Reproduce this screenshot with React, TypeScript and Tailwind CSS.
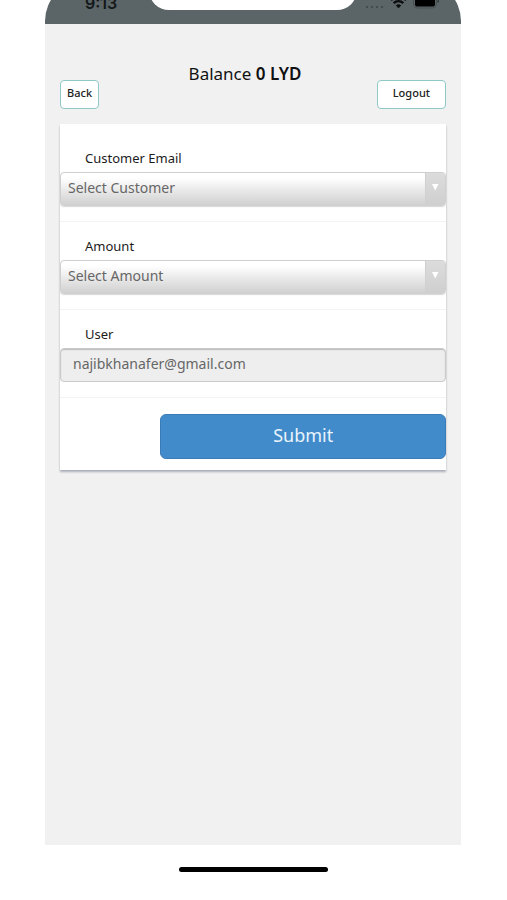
import type { ReactNode } from 'react'

function StatusBar() {
  return (
    <div className="flex h-6 flex-col justify-end overflow-hidden">
      <div className="grid h-[43px] shrink-0 grid-cols-[1fr_208px_1fr] rounded-t-[40px] bg-[#5b6466]">
        <span className="self-end pb-[11px] pl-10 font-['Inter'] text-[16px] leading-5 font-semibold text-[#14181a]">
          9:13
        </span>
        <div className="h-[29px] rounded-b-[20px] bg-white" />
        <div className="flex items-end justify-end gap-[6px] pr-[22px] pb-[15px]">
          <svg width="19" height="14" viewBox="0 0 19 14" className="shrink-0" aria-hidden="true">
            <g fill="#3f4749">
              <circle cx="2" cy="12" r="1.1" />
              <circle cx="7" cy="12" r="1.1" />
              <circle cx="12" cy="12" r="1.1" />
              <circle cx="17" cy="12" r="1.1" />
            </g>
          </svg>
          <svg width="17" height="14" viewBox="0 0 17 14" className="shrink-0" aria-hidden="true">
            <g fill="none" stroke="#0b0d0e" strokeWidth="2.2">
              <path d="M1 5.1a10.6 10.6 0 0 1 15 0" />
              <path d="M3.7 8.1a6.8 6.8 0 0 1 9.6 0" />
            </g>
            <path d="M8.5 13.3 5.8 10.5a3.8 3.8 0 0 1 5.4 0z" fill="#0b0d0e" />
          </svg>
          <svg width="26" height="14" viewBox="0 0 26 14" className="shrink-0" aria-hidden="true">
            <rect x="0.5" y="-1" width="23" height="14" rx="4" fill="none" stroke="#474f51" />
            <rect x="2" y="0" width="20" height="11.500" rx="2" fill="#000" />
            <path d="M24.500 4v4c1-.3 1.500-1 1.500-2s-.5-1.700-1.500-2z" fill="#343b3d" />
          </svg>
        </div>
      </div>
    </div>
  )
}

function Field({ id, label, children }: { id: string; label: string; children: ReactNode }) {
  return (
    <div className="border-b border-[#f3f3f3] pt-[14px] pb-[15px]">
      <label htmlFor={id} className="mb-1 block pl-[25px] text-[13px] leading-5 text-[#1c1c1c]">
        {label}
      </label>
      {children}
    </div>
  )
}

function Picker({ id, placeholder }: { id: string; placeholder: string }) {
  return (
    <div className="relative">
      <select
        id={id}
        className="block h-[34px] w-full appearance-none rounded-[4px] border border-[#cfcfcf] bg-linear-to-b from-white from-15% to-[#d0d0d0] pr-7 pb-[3px] pl-[7px] text-[14px] text-[#666] shadow-[0_1px_1px_#d8d8d8]"
      >
        <option>{placeholder}</option>
      </select>
      <div className="pointer-events-none absolute inset-y-px right-px flex w-5 justify-center rounded-r-[3px] border-l border-[#d0d0d0] bg-linear-to-b from-[#dcdcdc] to-[#cfcfcf] pt-[10px] pr-[2px]">
        <svg width="8" height="8" viewBox="0 0 8 8" aria-hidden="true">
          <path d="M1 1h6.500L4.200 7.500z" fill="#fff" />
        </svg>
      </div>
    </div>
  )
}

export default function App() {
  return (
    <div className="flex min-h-screen flex-col bg-white pr-[46px] pl-[45px] font-['Noto_Sans',sans-serif]">
      <StatusBar />
      <main className="grow bg-[#f1f1f1] px-[15px] pt-[38px]">
        <h1 className="pr-4 text-center text-[17px] leading-6 text-[#111]">
          Balance <b className="font-semibold">0 LYD</b>
        </h1>
        <div className="-mt-[6px] flex justify-between">
          <button
            type="button"
            className="h-[29px] rounded-[4px] border border-[#8fc9c6] bg-white px-[6px] pb-[2px] text-[11px] font-medium text-[#222]"
          >
            Back
          </button>
          <button
            type="button"
            className="h-[29px] rounded-[4px] border border-[#8fc9c6] bg-white px-[15px] pb-[2px] text-[11px] font-medium text-[#222]"
          >
            Logout
          </button>
        </div>

        <form className="mt-[15px] bg-white pt-[10px] shadow-[0_2px_2px_#a9adb8]">
          <Field id="customer" label="Customer Email">
            <Picker id="customer" placeholder="Select Customer" />
          </Field>
          <Field id="amount" label="Amount">
            <Picker id="amount" placeholder="Select Amount" />
          </Field>
          <Field id="user" label="User">
            <input
              id="user"
              type="text"
              readOnly
              value="najibkhanafer@gmail.com"
              className="block h-[34px] w-full rounded-[4px] border border-[#cacaca] bg-[#eee] px-3 pb-[3px] text-[14px] text-[#666] shadow-[inset_0_1px_1px_#bbb]"
            />
          </Field>
          <div className="flex justify-end pt-4 pb-[11px]">
            <button
              type="button"
              className="h-[45px] w-[74%] rounded-[6px] border border-[#3a7cb8] bg-[#428bca] pb-[2px] text-[18px] text-[#e9f4fc]"
            >
              Submit
            </button>
          </div>
        </form>
      </main>
      <footer className="flex h-[55px] shrink-0 justify-center pt-[22px]">
        <div className="h-[5px] w-[149px] rounded-full bg-black" />
      </footer>
    </div>
  )
}
